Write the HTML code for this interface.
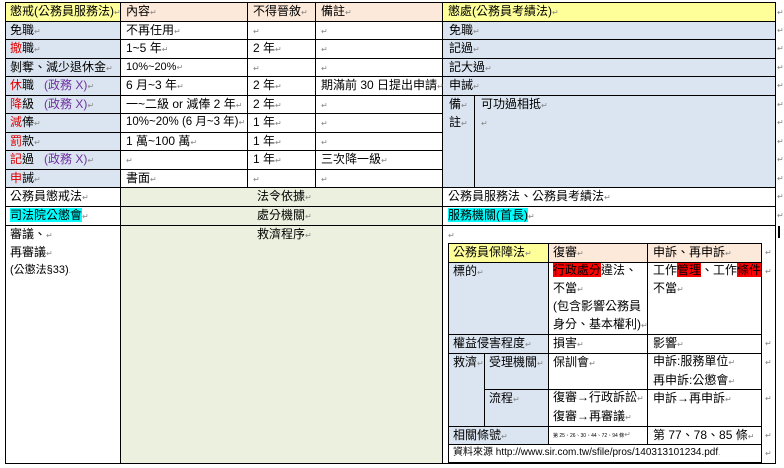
<!DOCTYPE html>
<html><head><meta charset="utf-8">
<style>
*{margin:0;padding:0;box-sizing:border-box}
body{width:784px;height:468px;background:#fff;position:relative;overflow:hidden;font-family:"Liberation Sans","Noto Sans CJK TC",sans-serif;font-size:12px;color:#000}
.b{position:absolute}
.h{position:absolute;height:1px;background:#000}
.v{position:absolute;width:1px;background:#000}
.t{position:absolute;white-space:nowrap;line-height:18px}
.p{color:#888;font-size:8px}
.r{color:#e00000}
.pu{color:#7030a0}
.cy{background:#00ffff}
.rd{background:#ff0000}
</style></head><body>
<!-- backgrounds -->
<div class="b" style="left:5px;top:2px;width:115px;height:19px;background:#ffff99"></div>
<div class="b" style="left:120px;top:2px;width:322px;height:19px;background:#fde9d9"></div>
<div class="b" style="left:442px;top:2px;width:333px;height:19px;background:#ffff99"></div>
<div class="b" style="left:5px;top:21px;width:115px;height:166px;background:#dbe5f1"></div>
<div class="b" style="left:442px;top:21px;width:333px;height:166px;background:#dbe5f1"></div>
<div class="b" style="left:120px;top:187px;width:322px;height:276px;background:#ebf1de"></div>
<div class="b" style="left:448px;top:243px;width:100px;height:19px;background:#ffff99"></div>
<div class="b" style="left:548px;top:243px;width:213px;height:19px;background:#fde9d9"></div>
<div class="b" style="left:448px;top:262px;width:100px;height:182px;background:#dbe5f1"></div>

<!-- outer horizontal lines -->
<div class="h" style="left:5px;top:2px;width:771px"></div>
<div class="h" style="left:5px;top:21px;width:771px"></div>
<div class="h" style="left:5px;top:39px;width:771px"></div>
<div class="h" style="left:5px;top:58px;width:771px"></div>
<div class="h" style="left:5px;top:76px;width:771px"></div>
<div class="h" style="left:5px;top:95px;width:771px"></div>
<div class="h" style="left:5px;top:113px;width:437px"></div>
<div class="h" style="left:5px;top:132px;width:437px"></div>
<div class="h" style="left:5px;top:150px;width:437px"></div>
<div class="h" style="left:5px;top:169px;width:437px"></div>
<div class="h" style="left:5px;top:187px;width:771px"></div>
<div class="h" style="left:5px;top:206px;width:771px"></div>
<div class="h" style="left:5px;top:225px;width:771px"></div>
<div class="h" style="left:5px;top:463px;width:771px"></div>
<!-- outer verticals -->
<div class="v" style="left:5px;top:2px;height:462px"></div>
<div class="v" style="left:120px;top:2px;height:462px"></div>
<div class="v" style="left:247px;top:2px;height:185px"></div>
<div class="v" style="left:315px;top:2px;height:185px"></div>
<div class="v" style="left:442px;top:2px;height:462px"></div>
<div class="v" style="left:474px;top:95px;height:92px"></div>
<div class="v" style="left:775px;top:2px;height:462px"></div>
<div class="b" style="left:778px;top:226px;width:2px;height:12px;background:#000"></div>

<!-- inner table lines -->
<div class="h" style="left:448px;top:243px;width:314px"></div>
<div class="h" style="left:448px;top:262px;width:314px"></div>
<div class="h" style="left:448px;top:334px;width:314px"></div>
<div class="h" style="left:448px;top:353px;width:314px"></div>
<div class="h" style="left:484px;top:389px;width:278px"></div>
<div class="h" style="left:448px;top:426px;width:314px"></div>
<div class="h" style="left:448px;top:444px;width:314px"></div>
<div class="h" style="left:448px;top:462px;width:314px"></div>
<div class="v" style="left:448px;top:243px;height:220px"></div>
<div class="v" style="left:548px;top:243px;height:201px"></div>
<div class="v" style="left:647px;top:243px;height:201px"></div>
<div class="v" style="left:484px;top:353px;height:73px"></div>
<div class="v" style="left:761px;top:243px;height:220px"></div>

<!-- text row 0 -->
<div class="t" style="left:10px;top:2px">懲戒(公務員服務法)<span class="p">↵</span></div>
<div class="t" style="left:126px;top:2px">內容<span class="p">↵</span></div>
<div class="t" style="left:253px;top:2px">不得晉敘<span class="p">↵</span></div>
<div class="t" style="left:321px;top:2px">備註<span class="p">↵</span></div>
<div class="t" style="left:448px;top:2px">懲處(公務員考績法)<span class="p">↵</span></div>
<!-- col1 -->
<div class="t" style="left:10px;top:21px">免職<span class="p">↵</span></div>
<div class="t" style="left:10px;top:39px"><span class="r">撤</span>職<span class="p">↵</span></div>
<div class="t" style="left:10px;top:58px">剝奪、減少退休金<span class="p">↵</span></div>
<div class="t" style="left:10px;top:76px"><span class="r">休</span>職 &nbsp;&nbsp;<span class="pu">(政務 X)</span><span class="p">↵</span></div>
<div class="t" style="left:10px;top:95px"><span class="r">降</span>級 &nbsp;&nbsp;<span class="pu">(政務 X)</span><span class="p">↵</span></div>
<div class="t" style="left:10px;top:113px"><span class="r">減</span>俸<span class="p">↵</span></div>
<div class="t" style="left:10px;top:132px"><span class="r">罰</span>款<span class="p">↵</span></div>
<div class="t" style="left:10px;top:150px"><span class="r">記</span>過 &nbsp;&nbsp;<span class="pu">(政務 X)</span><span class="p">↵</span></div>
<div class="t" style="left:10px;top:169px"><span class="r">申</span>誡<span class="p">↵</span></div>
<!-- col2 -->
<div class="t" style="left:126px;top:21px">不再任用<span class="p">↵</span></div>
<div class="t" style="left:126px;top:39px">1~5 年<span class="p">↵</span></div>
<div class="t" style="left:126px;top:58px;font-size:11px">10%~20%<span class="p">↵</span></div>
<div class="t" style="left:126px;top:76px">6 月~3 年<span class="p">↵</span></div>
<div class="t" style="left:126px;top:95px">一~二級 or 減俸 2 年<span class="p">↵</span></div>
<div class="t" style="left:126px;top:113px;font-size:11.5px">10%~20% (6 月~3 年)<span class="p">↵</span></div>
<div class="t" style="left:126px;top:132px">1 萬~100 萬<span class="p">↵</span></div>
<div class="t" style="left:126px;top:150px"><span class="p">↵</span></div>
<div class="t" style="left:126px;top:169px">書面<span class="p">↵</span></div>
<!-- col3 -->
<div class="t" style="left:253px;top:21px"><span class="p">↵</span></div>
<div class="t" style="left:253px;top:39px">2 年<span class="p">↵</span></div>
<div class="t" style="left:253px;top:58px"><span class="p">↵</span></div>
<div class="t" style="left:253px;top:76px">2 年<span class="p">↵</span></div>
<div class="t" style="left:253px;top:95px">2 年<span class="p">↵</span></div>
<div class="t" style="left:253px;top:113px">1 年<span class="p">↵</span></div>
<div class="t" style="left:253px;top:132px">1 年<span class="p">↵</span></div>
<div class="t" style="left:253px;top:150px">1 年<span class="p">↵</span></div>
<div class="t" style="left:253px;top:169px"><span class="p">↵</span></div>
<!-- col4 -->
<div class="t" style="left:321px;top:21px"><span class="p">↵</span></div>
<div class="t" style="left:321px;top:39px"><span class="p">↵</span></div>
<div class="t" style="left:321px;top:58px"><span class="p">↵</span></div>
<div class="t" style="left:321px;top:76px">期滿前 30 日提出申請<span class="p">↵</span></div>
<div class="t" style="left:321px;top:95px"><span class="p">↵</span></div>
<div class="t" style="left:321px;top:113px"><span class="p">↵</span></div>
<div class="t" style="left:321px;top:132px"><span class="p">↵</span></div>
<div class="t" style="left:321px;top:150px">三次降一級<span class="p">↵</span></div>
<div class="t" style="left:321px;top:169px"><span class="p">↵</span></div>
<!-- right -->
<div class="t" style="left:449px;top:21px">免職<span class="p">↵</span></div>
<div class="t" style="left:449px;top:39px">記過<span class="p">↵</span></div>
<div class="t" style="left:449px;top:58px">記大過<span class="p">↵</span></div>
<div class="t" style="left:449px;top:76px">申誡<span class="p">↵</span></div>
<div class="t" style="left:449px;top:95px">備<span class="p">↵</span></div>
<div class="t" style="left:449px;top:113px">註<span class="p">↵</span></div>
<div class="t" style="left:481px;top:95px">可功過相抵<span class="p">↵</span></div>
<div class="t" style="left:481px;top:113px"><span class="p">↵</span></div>
<!-- lower rows -->
<div class="t" style="left:10px;top:187px">公務員懲戒法<span class="p">↵</span></div>
<div class="t" style="left:257px;top:187px">法令依據<span class="p">↵</span></div>
<div class="t" style="left:448px;top:187px">公務員服務法、公務員考績法<span class="p">↵</span></div>
<div class="t" style="left:10px;top:206px"><span class="cy">司法院公懲會</span><span class="p">↵</span></div>
<div class="t" style="left:257px;top:206px">處分機關<span class="p">↵</span></div>
<div class="t" style="left:448px;top:206px"><span class="cy">服務機關(首長)</span><span class="p">↵</span></div>
<div class="t" style="left:10px;top:225px">審議、<span class="p">↵</span></div>
<div class="t" style="left:10px;top:243px">再審議<span class="p">↵</span></div>
<div class="t" style="left:10px;top:261px;font-size:11px">(公懲法§33)<span class="p">.</span></div>
<div class="t" style="left:257px;top:225px">救濟程序<span class="p">↵</span></div>
<div class="t" style="left:448px;top:225px"><span class="p">↵</span></div>
<!-- right-edge marks -->
<div class="t p" style="left:777px;top:4px">↵</div><div class="t p" style="left:777px;top:22px">↵</div><div class="t p" style="left:777px;top:40px">↵</div><div class="t p" style="left:777px;top:59px">↵</div><div class="t p" style="left:777px;top:77px">↵</div><div class="t p" style="left:777px;top:96px">↵</div><div class="t p" style="left:777px;top:114px">↵</div><div class="t p" style="left:777px;top:133px">↵</div><div class="t p" style="left:777px;top:151px">↵</div><div class="t p" style="left:777px;top:170px">↵</div><div class="t p" style="left:777px;top:188px">↵</div><div class="t p" style="left:777px;top:207px">↵</div>
<div class="t p" style="left:765px;top:244px">↵</div><div class="t p" style="left:765px;top:263px">↵</div><div class="t p" style="left:765px;top:335px">↵</div><div class="t p" style="left:765px;top:354px">↵</div><div class="t p" style="left:765px;top:390px">↵</div><div class="t p" style="left:765px;top:427px">↵</div><div class="t p" style="left:765px;top:445px">↵</div>
<!-- inner table text -->
<div class="t" style="left:453px;top:243px">公務員保障法<span class="p">↵</span></div>
<div class="t" style="left:553px;top:243px">復審<span class="p">↵</span></div>
<div class="t" style="left:653px;top:243px">申訴、再申訴<span class="p">↵</span></div>
<div class="t" style="left:453px;top:262px">標的<span class="p">↵</span></div>
<div class="t" style="left:553px;top:262px;line-height:17.7px"><span class="rd">行政處分</span>違法、<br>不當<span class="p">↵</span><br>(包含影響公務員<br>身分、基本權利)<span class="p">↵</span></div>
<div class="t" style="left:653px;top:262px;line-height:17.7px">工作<span class="rd">管理</span>、工作<span class="rd">條件</span><br>不當<span class="p">↵</span></div>
<div class="t" style="left:453px;top:334px">權益侵害程度<span class="p">↵</span></div>
<div class="t" style="left:553px;top:334px">損害<span class="p">↵</span></div>
<div class="t" style="left:653px;top:334px">影響<span class="p">↵</span></div>
<div class="t" style="left:453px;top:353px">救濟<span class="p">↵</span></div>
<div class="t" style="left:489px;top:353px">受理機關<span class="p">↵</span></div>
<div class="t" style="left:553px;top:353px">保訓會<span class="p">↵</span></div>
<div class="t" style="left:653px;top:353px;line-height:17.7px">申訴:服務單位<span class="p">↵</span><br>再申訴:公懲會<span class="p">↵</span></div>
<div class="t" style="left:489px;top:389px">流程<span class="p">↵</span></div>
<div class="t" style="left:553px;top:389px;line-height:17.7px">復審→行政訴訟<span class="p">↵</span><br>復審→再審議<span class="p">↵</span></div>
<div class="t" style="left:653px;top:389px">申訴→再申訴<span class="p">↵</span></div>
<div class="t" style="left:453px;top:426px">相關條號<span class="p">↵</span></div>
<div class="t" style="left:553px;top:426px;font-size:5px">第 25、26、30、44、72、94 條<span class="p">↵</span></div>
<div class="t" style="left:653px;top:426px">第 77、78、85 條<span class="p">↵</span></div>
<div class="t" style="left:453px;top:444px;font-size:10px">資料來源 http://www.sir.com.tw/sfile/pros/140313101234.pdf<span class="p">.</span></div>
</body></html>
